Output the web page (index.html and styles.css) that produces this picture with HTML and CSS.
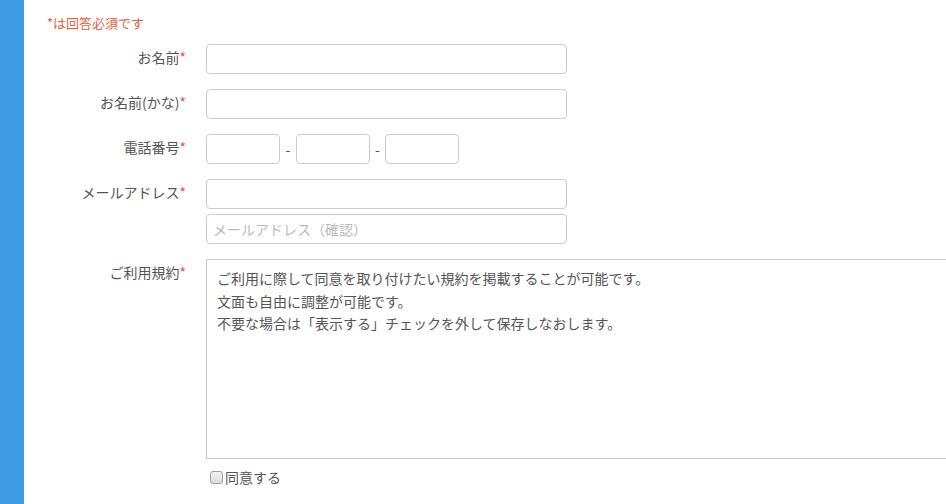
FILE: index.html
```html
<!DOCTYPE html>
<html lang="ja">
<head>
<meta charset="utf-8">
<link rel="stylesheet" href="styles.css">
</head>
<body>
<div class="page">
  <div class="sidebar"></div>
  <div class="main">
    <p class="notice"><span class="req">*</span>は回答必須です</p>
    <div class="form">
      <div class="row">
        <div class="label">お名前<span class="req">*</span></div>
        <div class="field"><input class="input wide" type="text"></div>
      </div>
      <div class="row">
        <div class="label">お名前(かな)<span class="req">*</span></div>
        <div class="field"><input class="input wide" type="text"></div>
      </div>
      <div class="row">
        <div class="label">電話番号<span class="req">*</span></div>
        <div class="field tel">
          <input class="input short" type="text"><span class="dash">-</span><input class="input short" type="text"><span class="dash dash2">-</span><input class="input short" type="text">
        </div>
      </div>
      <div class="row">
        <div class="label">メールアドレス<span class="req">*</span></div>
        <div class="field stack">
          <input class="input wide" type="text">
          <input class="input wide" type="text" placeholder="メールアドレス（確認）">
        </div>
      </div>
      <div class="row">
        <div class="label top">ご利用規約<span class="req">*</span></div>
        <div class="field stack">
          <textarea class="terms" readonly>ご利用に際して同意を取り付けたい規約を掲載することが可能です。
文面も自由に調整が可能です。
不要な場合は「表示する」チェックを外して保存しなおします。</textarea>
          <label class="agree"><input type="checkbox" class="check">同意する</label>
        </div>
      </div>
    </div>
  </div>
</div>
</body>
</html>
```
FILE: styles.css
```css
html, body {
  margin: 0;
  padding: 0;
  background: #fff;
  overflow: hidden;
}
body {
  font-family: "Noto Sans CJK JP", "Noto Sans", sans-serif;
  color: #555;
  font-size: 14px;
}
.page {
  display: flex;
  min-height: 504px;
}
.sidebar {
  width: 24px;
  flex: none;
  background: #3f9ce3;
}
.main {
  flex: 1;
  min-width: 0;
  padding-top: 13px;
}
.notice {
  margin: 0 0 12px 23px;
  font-size: 13px;
  line-height: 19px;
  color: #e9603f;
}
.req {
  color: #e9533f;
}
.form {
  display: flex;
  flex-direction: column;
  gap: 15px;
}
.row {
  display: grid;
  grid-template-columns: 162px 1fr;
  column-gap: 20px;
  align-items: start;
}
.label {
  text-align: right;
  line-height: 27px;
  white-space: nowrap;
}
.label.top {
  line-height: 20px;
  padding-top: 3px;
}
.field {
  display: flex;
  align-items: center;
}
.stack {
  flex-direction: column;
  align-items: flex-start;
  gap: 5px;
}
.input {
  box-sizing: border-box;
  height: 30px;
  border: 1px solid #ccc;
  border-radius: 4px;
  padding: 0 6px;
  font-family: inherit;
  font-size: 14px;
  color: #555;
  background: #fff;
  margin: 0;
}
.input::placeholder {
  color: #bbb;
}
.wide {
  width: 361px;
}
.short {
  width: 74px;
}
.dash {
  width: 16px;
  text-align: center;
  line-height: 30px;
  color: #555;
}
.dash2 {
  width: 15px;
}
.terms {
  box-sizing: border-box;
  width: 780px;
  height: 200px;
  margin: 0;
  border: 1px solid #ccc;
  border-radius: 0;
  padding: 7px 10px;
  font-family: inherit;
  font-size: 14px;
  line-height: 22.5px;
  color: #555;
  resize: none;
  background: #fff;
}
.agree {
  display: flex;
  align-items: center;
  margin-top: 3px;
  line-height: 20px;
  color: #555;
}
.check {
  appearance: none;
  -webkit-appearance: none;
  box-sizing: border-box;
  width: 13px;
  height: 13px;
  margin: 0 2px 0 4px;
  border: 1px solid #a0a0a0;
  border-radius: 3px;
  background: linear-gradient(#f3f3f3, #dcdcdc);
}
```
